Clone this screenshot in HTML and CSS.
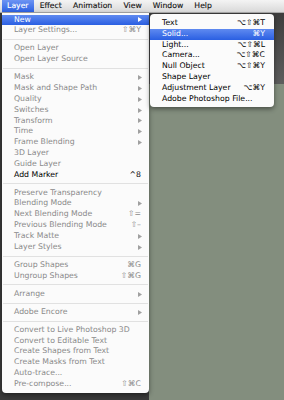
FILE: index.html
```html
<!DOCTYPE html>
<html>
<head>
<meta charset="utf-8">
<link rel="stylesheet" href="styles.css">
</head>
<body>
<div class="menubar">
  <span class="mb-item active">Layer</span>
  <span class="mb-item">Effect</span>
  <span class="mb-item">Animation</span>
  <span class="mb-item">View</span>
  <span class="mb-item">Window</span>
  <span class="mb-item">Help</span>
</div>
<div class="workspace">
  <div class="panel"></div>
  <div class="comp">
    <div class="comp-head"></div>
    <div class="comp-view"></div>
  </div>
</div>

<div class="menu main">
  <div class="item hl sub"><span class="label">New</span><svg class="arrow" width="4" height="5" viewBox="0 0 4 5"><polygon points="0,0 4,2.5 0,5"/></svg></div>
  <div class="item off"><span class="label">Layer Settings...</span><span class="key">⇧⌘Y</span></div>
  <div class="sep"></div>
  <div class="item off"><span class="label">Open Layer</span></div>
  <div class="item off"><span class="label">Open Layer Source</span></div>
  <div class="sep"></div>
  <div class="item off sub"><span class="label">Mask</span><svg class="arrow" width="4" height="5" viewBox="0 0 4 5"><polygon points="0,0 4,2.5 0,5"/></svg></div>
  <div class="item off sub"><span class="label">Mask and Shape Path</span><svg class="arrow" width="4" height="5" viewBox="0 0 4 5"><polygon points="0,0 4,2.5 0,5"/></svg></div>
  <div class="item off sub"><span class="label">Quality</span><svg class="arrow" width="4" height="5" viewBox="0 0 4 5"><polygon points="0,0 4,2.5 0,5"/></svg></div>
  <div class="item off sub"><span class="label">Switches</span><svg class="arrow" width="4" height="5" viewBox="0 0 4 5"><polygon points="0,0 4,2.5 0,5"/></svg></div>
  <div class="item off sub"><span class="label">Transform</span><svg class="arrow" width="4" height="5" viewBox="0 0 4 5"><polygon points="0,0 4,2.5 0,5"/></svg></div>
  <div class="item off sub"><span class="label">Time</span><svg class="arrow" width="4" height="5" viewBox="0 0 4 5"><polygon points="0,0 4,2.5 0,5"/></svg></div>
  <div class="item off sub"><span class="label">Frame Blending</span><svg class="arrow" width="4" height="5" viewBox="0 0 4 5"><polygon points="0,0 4,2.5 0,5"/></svg></div>
  <div class="item off"><span class="label">3D Layer</span></div>
  <div class="item off"><span class="label">Guide Layer</span></div>
  <div class="item"><span class="label">Add Marker</span><span class="key">^8</span></div>
  <div class="sep"></div>
  <div class="item off"><span class="label">Preserve Transparency</span></div>
  <div class="item off sub"><span class="label">Blending Mode</span><svg class="arrow" width="4" height="5" viewBox="0 0 4 5"><polygon points="0,0 4,2.5 0,5"/></svg></div>
  <div class="item off"><span class="label">Next Blending Mode</span><span class="key">⇧=</span></div>
  <div class="item off"><span class="label">Previous Blending Mode</span><span class="key">⇧–</span></div>
  <div class="item off sub"><span class="label">Track Matte</span><svg class="arrow" width="4" height="5" viewBox="0 0 4 5"><polygon points="0,0 4,2.5 0,5"/></svg></div>
  <div class="item off sub"><span class="label">Layer Styles</span><svg class="arrow" width="4" height="5" viewBox="0 0 4 5"><polygon points="0,0 4,2.5 0,5"/></svg></div>
  <div class="sep"></div>
  <div class="item off"><span class="label">Group Shapes</span><span class="key">⌘G</span></div>
  <div class="item off"><span class="label">Ungroup Shapes</span><span class="key">⇧⌘G</span></div>
  <div class="sep"></div>
  <div class="item off sub"><span class="label">Arrange</span><svg class="arrow" width="4" height="5" viewBox="0 0 4 5"><polygon points="0,0 4,2.5 0,5"/></svg></div>
  <div class="sep"></div>
  <div class="item off sub"><span class="label">Adobe Encore</span><svg class="arrow" width="4" height="5" viewBox="0 0 4 5"><polygon points="0,0 4,2.5 0,5"/></svg></div>
  <div class="sep"></div>
  <div class="item off"><span class="label">Convert to Live Photoshop 3D</span></div>
  <div class="item off"><span class="label">Convert to Editable Text</span></div>
  <div class="item off"><span class="label">Create Shapes from Text</span></div>
  <div class="item off"><span class="label">Create Masks from Text</span></div>
  <div class="item off"><span class="label">Auto-trace...</span></div>
  <div class="item off"><span class="label">Pre-compose...</span><span class="key">⇧⌘C</span></div>
</div>

<div class="menu submenu">
  <div class="item"><span class="label">Text</span><span class="key">⌥⇧⌘T</span></div>
  <div class="item hl"><span class="label">Solid...</span><span class="key">⌘Y</span></div>
  <div class="item"><span class="label">Light...</span><span class="key">⌥⇧⌘L</span></div>
  <div class="item"><span class="label">Camera...</span><span class="key">⌥⇧⌘C</span></div>
  <div class="item"><span class="label">Null Object</span><span class="key">⌥⇧⌘Y</span></div>
  <div class="item"><span class="label">Shape Layer</span></div>
  <div class="item"><span class="label">Adjustment Layer</span><span class="key">⌥⌘Y</span></div>
  <div class="item"><span class="label">Adobe Photoshop File...</span></div>
</div>
</body>
</html>
```
FILE: styles.css
```css
html, body {
  margin: 0;
  padding: 0;
}
body {
  width: 284px;
  height: 400px;
  overflow: hidden;
  position: relative;
  font-family: "DejaVu Sans", "Liberation Sans", sans-serif;
  font-size: 7.75px;
  background: #3a3a3a;
}

.menubar {
  height: 12px;
  display: flex;
  padding-left: 1.5px;
  background: linear-gradient(#f4f4f4, #d9d9d9);
  border-bottom: 1px solid #a9a9a9;
}
.mb-item {
  padding: 0 5.6px;
  line-height: 12.5px;
  font-size: 7.7px;
  color: #111;
  -webkit-text-stroke: 0.12px #111;
}
.mb-item.active {
  background: linear-gradient(#6d94f3, #2c61e3);
  color: #fff;
  -webkit-text-stroke-color: #fff;
}

.workspace {
  display: flex;
  height: 387px;
}
.panel {
  width: 149px;
  background: #3a3a3a;
}
.comp {
  flex: 1;
  display: flex;
  flex-direction: column;
}
.comp-head {
  height: 71px;
  background: linear-gradient(#3d3d3d, #444 20%, #5d5d5d);
}
.comp-view {
  flex: 1;
  background: #838e7e;
}

.menu {
  position: absolute;
  background: #fbfbfb;
  box-shadow: 0 2px 5px rgba(0, 0, 0, 0.45);
  border-radius: 0 0 4px 4px;
}
.menu.main {
  left: 2px;
  top: 13px;
  width: 147px;
  padding: 1.6px 0 3.6px;
}
.menu.submenu {
  left: 150px;
  top: 14px;
  width: 124px;
  padding: 4.1px 0 3px;
  border-radius: 4px;
}

.item {
  display: flex;
  align-items: center;
  height: 10.8px;
  line-height: 10.8px;
  padding: 0 8px 0 12px;
  color: #000;
  white-space: nowrap;
}
.submenu .item {
  padding-right: 9px;
}
.item.sub {
  padding-right: 7px;
}
.item .label {
  flex: 1;
}
.item.off {
  color: #8a8a8a;
}
.item .arrow {
  fill: #a0a0a0;
  display: block;
}
.item.hl {
  background: linear-gradient(#5f8af0, #2a5fe2);
  color: #fff;
}
.item.hl .arrow {
  fill: #fff;
}

.sep {
  height: 7.3px;
  display: flex;
  align-items: center;
}
.sep::after {
  content: "";
  flex: 1;
  height: 1px;
  background: #e1e1e1;
  margin: 0 1px;
}
```
